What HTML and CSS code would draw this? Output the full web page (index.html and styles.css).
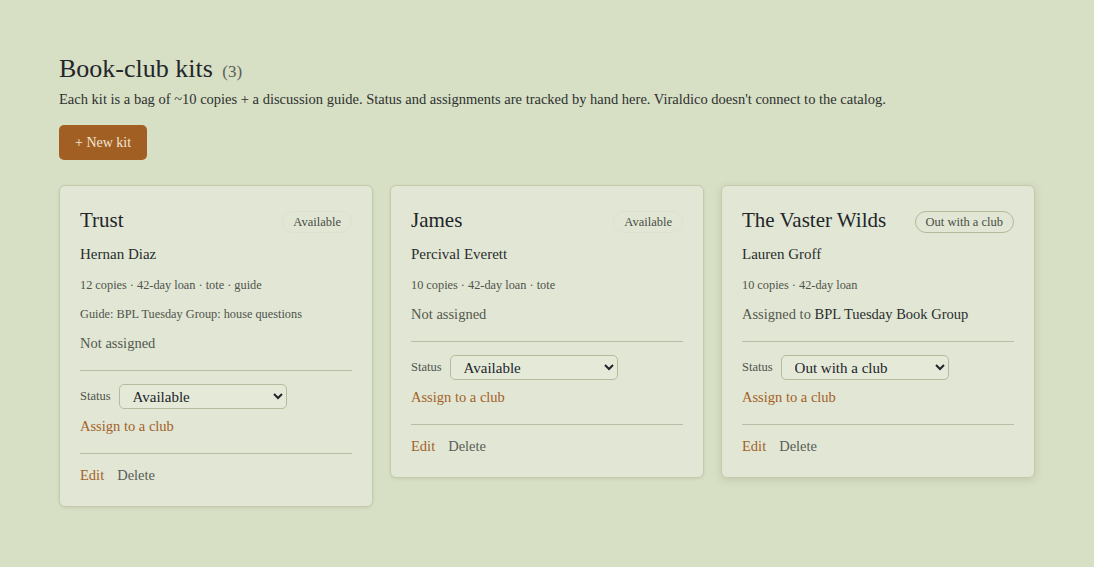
FILE: index.html
```html
<!DOCTYPE html>
<html lang="en">
<head>
<meta charset="utf-8">
<title>Book-club kits</title>
<link rel="stylesheet" href="styles.css">
</head>
<body>
<main class="page">
  <header class="head">
    <h1 class="title">Book-club kits <span class="count">(3)</span></h1>
    <p class="lede">Each kit is a bag of ~10 copies + a discussion guide. Status and assignments are tracked by hand here. Viraldico doesn't connect to the catalog.</p>
    <button class="btn-primary">+ New kit</button>
  </header>
  <section class="grid">
    <article class="card">
      <div class="card-head">
        <h2 class="card-title">Trust</h2>
        <span class="badge">Available</span>
      </div>
      <p class="author">Hernan Diaz</p>
      <p class="meta">12 copies · 42-day loan · tote · guide</p>
      <p class="meta">Guide: BPL Tuesday Group: house questions</p>
      <p class="assign-state">Not assigned</p>
      <div class="section">
        <label class="status-row"><span class="status-label">Status</span>
          <select class="status-select"><option selected>Available</option><option>Out with a club</option></select>
        </label>
        <a class="link" href="#">Assign to a club</a>
      </div>
      <div class="actions">
        <a class="link" href="#">Edit</a>
        <a class="muted-link" href="#">Delete</a>
      </div>
    </article>
    <article class="card">
      <div class="card-head">
        <h2 class="card-title">James</h2>
        <span class="badge">Available</span>
      </div>
      <p class="author">Percival Everett</p>
      <p class="meta">10 copies · 42-day loan · tote</p>
      <p class="assign-state">Not assigned</p>
      <div class="section">
        <label class="status-row"><span class="status-label">Status</span>
          <select class="status-select"><option selected>Available</option><option>Out with a club</option></select>
        </label>
        <a class="link" href="#">Assign to a club</a>
      </div>
      <div class="actions">
        <a class="link" href="#">Edit</a>
        <a class="muted-link" href="#">Delete</a>
      </div>
    </article>
    <article class="card card-raised">
      <div class="card-head">
        <h2 class="card-title">The Vaster Wilds</h2>
        <span class="badge badge-out">Out with a club</span>
      </div>
      <p class="author">Lauren Groff</p>
      <p class="meta">10 copies · 42-day loan</p>
      <p class="assign-state assigned">Assigned to <span class="club">BPL Tuesday Book Group</span></p>
      <div class="section">
        <label class="status-row"><span class="status-label">Status</span>
          <select class="status-select"><option>Available</option><option selected>Out with a club</option></select>
        </label>
        <a class="link" href="#">Assign to a club</a>
      </div>
      <div class="actions">
        <a class="link" href="#">Edit</a>
        <a class="muted-link" href="#">Delete</a>
      </div>
    </article>
  </section>
</main>
</body>
</html>
```
FILE: styles.css
```css
* { box-sizing: border-box; }
html, body { margin: 0; padding: 0; }
body {
  background: #d7dfc5;
  color: #24272a;
  font-family: "Liberation Serif", "DejaVu Serif", serif;
}
.page { padding: 52px 59px 40px; }
.head { display: flex; flex-direction: column; align-items: flex-start; }
.title {
  margin: 0;
  font-size: 26px;
  font-weight: 400;
  line-height: 34px;
  color: #23262a;
}
.count { font-size: 17px; color: #5b5e58; margin-left: 3px; }
.lede { margin: 0; font-size: 14.5px; line-height: 20px; color: #2e3130; }
.btn-primary {
  margin-top: 16px;
  height: 35px;
  padding: 0 16px;
  border: none;
  border-radius: 5px;
  background: #a15f24;
  color: #f3e6d4;
  font-family: inherit;
  font-size: 14px;
}
.grid {
  margin-top: 25px;
  display: grid;
  grid-template-columns: repeat(3, 314px);
  column-gap: 17px;
  align-items: start;
}
.card {
  background: #e1e7d4;
  border: 1px solid #c5caad;
  border-radius: 6px;
  padding: 21px 20px 21px;
  box-shadow: 0 1px 3px rgba(90, 100, 60, 0.12);
}
.card-raised { box-shadow: 0 2px 8px rgba(90, 100, 60, 0.18); }
.card-head { display: flex; justify-content: space-between; align-items: center; }
.card-title { margin: 0; font-size: 21px; font-weight: 400; line-height: 26px; color: #22252a; }
.badge {
  font-size: 12.5px;
  line-height: 20px;
  padding: 0 10px;
  border: 1px solid #dce2ce;
  border-radius: 11px;
  color: #4a4d47;
  margin-top: 3px;
}
.badge-out { border-color: #b6b999; }
.author { margin: 11px 0 0; font-size: 15px; line-height: 20px; color: #2a2d2e; }
.meta { margin: 13px 0 0; font-size: 12.3px; line-height: 16px; color: #50534d; }
.assign-state { margin: 11px 0 0; font-size: 14.5px; line-height: 20px; color: #55584f; }
.assigned .club { color: #2a2d2e; }
.section {
  margin-top: 17px;
  border-top: 1px solid #b9bda3;
  border-bottom: 1px solid #b9bda3;
  padding: 13px 0 17px;
  display: flex;
  flex-direction: column;
  align-items: flex-start;
  gap: 7px;
}
.status-row { display: flex; align-items: center; gap: 8px; }
.status-label { font-size: 12.5px; color: #50534d; }
.status-select {
  width: 168px;
  height: 25px;
  border: 1px solid #b7ba9d;
  border-radius: 5px;
  background: #e4e9d8;
  color: #22252a;
  font-family: inherit;
  font-size: 15px;
  padding: 0 0 0 9px;
}
.link { color: #a4612a; text-decoration: none; font-size: 14.5px; line-height: 20px; }
.muted-link { color: #5a5d56; text-decoration: none; font-size: 14.5px; line-height: 20px; }
.actions { display: flex; gap: 13px; margin-top: 11px; }
```
